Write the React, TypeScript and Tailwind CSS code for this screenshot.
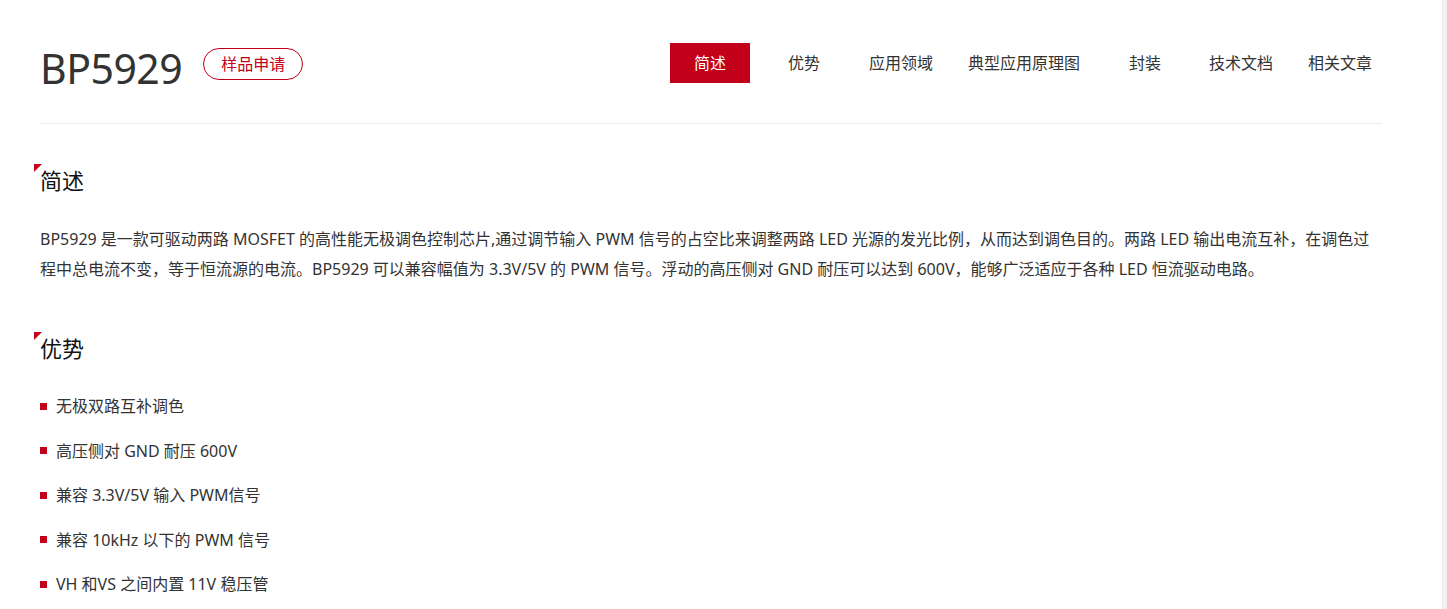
import React from "react";

const navItems: { label: string; cls: string }[] = [
  { label: "简述", cls: "w-[80px] bg-[#c3001a] text-white" },
  { label: "优势", cls: "w-[80px] ml-[14px] text-[#333]" },
  { label: "应用领域", cls: "w-[80px] ml-[17px] text-[#333]" },
  { label: "典型应用原理图", cls: "w-[128px] ml-[19px] text-[#333]" },
  { label: "封装", cls: "w-[80px] ml-[17px] text-[#333]" },
  { label: "技术文档", cls: "w-[80px] ml-[16px] text-[#333]" },
  { label: "相关文章", cls: "w-[80px] ml-[19px] text-[#333]" },
];

const advantages = [
  "无极双路互补调色",
  "高压侧对 GND 耐压 600V",
  "兼容 3.3V/5V 输入 PWM信号",
  "兼容 10kHz 以下的 PWM 信号",
  "VH 和VS 之间内置 11V 稳压管",
];

function SectionTitle({ children }: { children: React.ReactNode }) {
  return (
    <div className="relative h-[30px] text-[22px] leading-[30px] text-[#111]">
      <span className="absolute left-[-6px] top-[-1px] w-[8px] h-[8px] bg-[#c3001a] [clip-path:polygon(0_0,100%_0,0_100%)]" />
      {children}
    </div>
  );
}

export default function App() {
  return (
    <div
      className="flex min-h-screen bg-white"
      style={{ fontFamily: '"Noto Sans", "Noto Sans CJK SC", sans-serif' }}
    >
      <div className="flex-1 min-w-0">
        <div className="ml-[40px] w-[1342px]">
          {/* Header */}
          <div className="pt-[43px] pb-[40px] border-b border-[#ececec]">
            <div className="flex h-[40px] items-center">
              <div className="text-[41px] leading-[40px] text-[#333] mt-[10px] tracking-[-0.5px]">
                BP5929
              </div>
              <div className="ml-[21px] mt-[2px] w-[100px] h-[32px] rounded-full border border-[#c3001a] text-[#c3001a] text-[16px] flex items-center justify-center">
                样品申请
              </div>
              <div className="flex-1" />
              <div className="flex mr-[2px]">
                {navItems.map((n) => (
                  <div
                    key={n.label}
                    className={`${n.cls} h-[40px] flex items-center justify-center text-[16px]`}
                  >
                    {n.label}
                  </div>
                ))}
              </div>
            </div>
          </div>

          {/* 简述 */}
          <div className="pt-[41px]">
            <SectionTitle>简述</SectionTitle>
            <p className="mt-[29px] text-[16px] leading-[30px] text-[#333]">
              BP5929 是一款可驱动两路 MOSFET 的高性能无极调色控制芯片,通过调节输入 PWM 信号的占空比来调整两路 LED 光源的发光比例，从而达到调色目的。两路 LED 输出电流互补，在调色过程中总电流不变，等于恒流源的电流。BP5929 可以兼容幅值为 3.3V/5V 的 PWM 信号。浮动的高压侧对 GND 耐压可以达到 600V，能够广泛适应于各种 LED 恒流驱动电路。
            </p>
          </div>

          {/* 优势 */}
          <div className="pt-[49px]">
            <SectionTitle>优势</SectionTitle>
            <div className="mt-[21px] flex flex-col">
              {advantages.map((a) => (
                <div key={a} className="h-[44.5px] flex items-center text-[16px] text-[#333]">
                  <span className="w-[7px] h-[7px] bg-[#c3001a] mr-[9px]" />
                  {a}
                </div>
              ))}
            </div>
          </div>
        </div>
      </div>
      <div className="w-[5px] shrink-0 bg-[#f1f1f1]" />
    </div>
  );
}
